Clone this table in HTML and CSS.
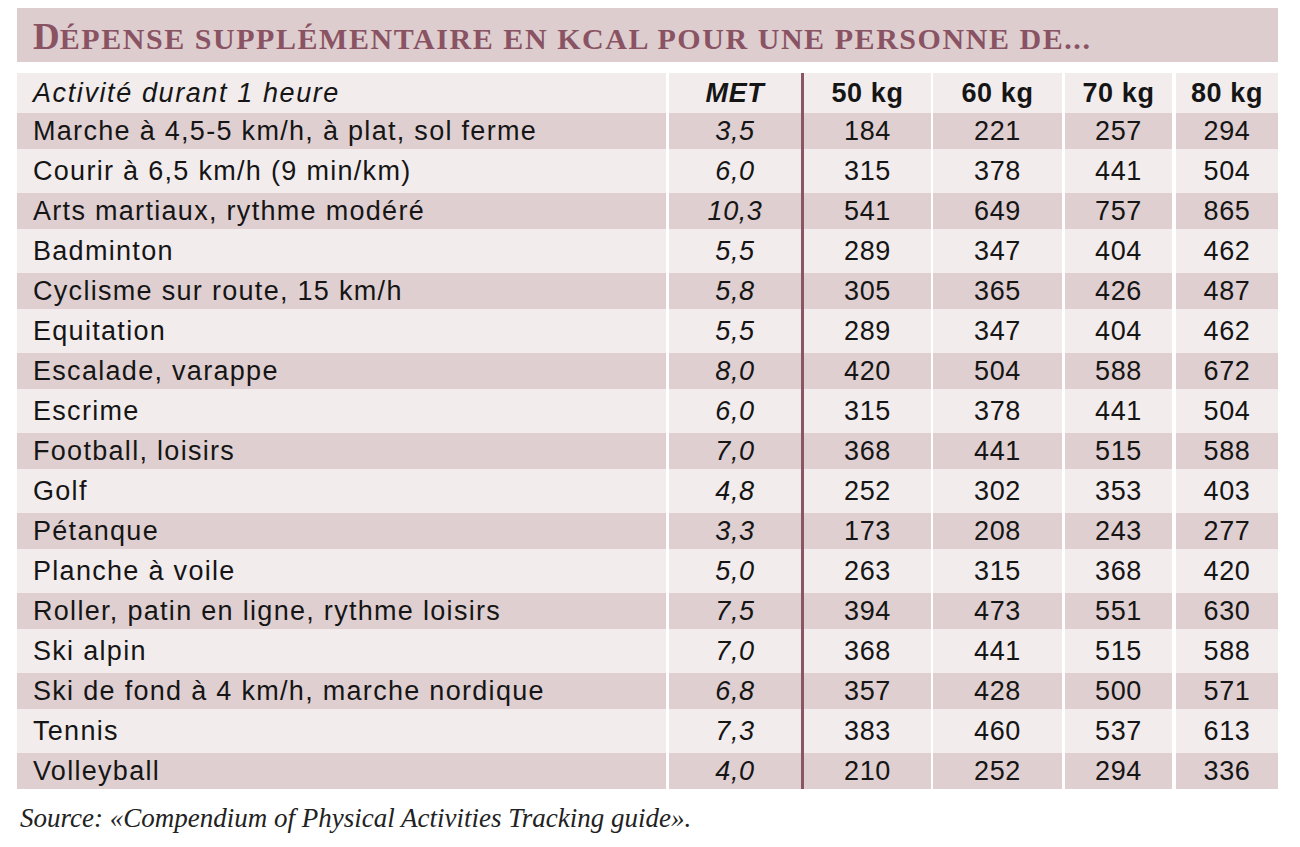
FILE: index.html
```html
<!DOCTYPE html>
<html lang="fr">
<head>
<meta charset="utf-8">
<title>Dépense supplémentaire en kcal</title>
<link rel="stylesheet" href="styles.css">
</head>
<body>
<div class="page">
  <h1 class="title"><span class="cap">D</span>ÉPENSE SUPPLÉMENTAIRE EN KCAL POUR UNE PERSONNE DE...</h1>
  <div class="table">
    <div class="row head">
      <div class="c act">Activité durant 1 heure</div>
      <div class="c met">MET</div>
      <div class="c n50">50 kg</div>
      <div class="c n60">60 kg</div>
      <div class="c n70">70 kg</div>
      <div class="c n80">80 kg</div>
    </div>
    <div class="row dark"><div class="c act">Marche à 4,5-5 km/h, à plat, sol ferme</div><div class="c met">3,5</div><div class="c n50">184</div><div class="c n60">221</div><div class="c n70">257</div><div class="c n80">294</div></div>
    <div class="row light"><div class="c act">Courir à 6,5 km/h (9 min/km)</div><div class="c met">6,0</div><div class="c n50">315</div><div class="c n60">378</div><div class="c n70">441</div><div class="c n80">504</div></div>
    <div class="row dark"><div class="c act">Arts martiaux, rythme modéré</div><div class="c met">10,3</div><div class="c n50">541</div><div class="c n60">649</div><div class="c n70">757</div><div class="c n80">865</div></div>
    <div class="row light"><div class="c act">Badminton</div><div class="c met">5,5</div><div class="c n50">289</div><div class="c n60">347</div><div class="c n70">404</div><div class="c n80">462</div></div>
    <div class="row dark"><div class="c act">Cyclisme sur route, 15 km/h</div><div class="c met">5,8</div><div class="c n50">305</div><div class="c n60">365</div><div class="c n70">426</div><div class="c n80">487</div></div>
    <div class="row light"><div class="c act">Equitation</div><div class="c met">5,5</div><div class="c n50">289</div><div class="c n60">347</div><div class="c n70">404</div><div class="c n80">462</div></div>
    <div class="row dark"><div class="c act">Escalade, varappe</div><div class="c met">8,0</div><div class="c n50">420</div><div class="c n60">504</div><div class="c n70">588</div><div class="c n80">672</div></div>
    <div class="row light"><div class="c act">Escrime</div><div class="c met">6,0</div><div class="c n50">315</div><div class="c n60">378</div><div class="c n70">441</div><div class="c n80">504</div></div>
    <div class="row dark"><div class="c act">Football, loisirs</div><div class="c met">7,0</div><div class="c n50">368</div><div class="c n60">441</div><div class="c n70">515</div><div class="c n80">588</div></div>
    <div class="row light"><div class="c act">Golf</div><div class="c met">4,8</div><div class="c n50">252</div><div class="c n60">302</div><div class="c n70">353</div><div class="c n80">403</div></div>
    <div class="row dark"><div class="c act">Pétanque</div><div class="c met">3,3</div><div class="c n50">173</div><div class="c n60">208</div><div class="c n70">243</div><div class="c n80">277</div></div>
    <div class="row light"><div class="c act">Planche à voile</div><div class="c met">5,0</div><div class="c n50">263</div><div class="c n60">315</div><div class="c n70">368</div><div class="c n80">420</div></div>
    <div class="row dark"><div class="c act">Roller, patin en ligne, rythme loisirs</div><div class="c met">7,5</div><div class="c n50">394</div><div class="c n60">473</div><div class="c n70">551</div><div class="c n80">630</div></div>
    <div class="row light"><div class="c act">Ski alpin</div><div class="c met">7,0</div><div class="c n50">368</div><div class="c n60">441</div><div class="c n70">515</div><div class="c n80">588</div></div>
    <div class="row dark"><div class="c act">Ski de fond à 4 km/h, marche nordique</div><div class="c met">6,8</div><div class="c n50">357</div><div class="c n60">428</div><div class="c n70">500</div><div class="c n80">571</div></div>
    <div class="row light"><div class="c act">Tennis</div><div class="c met">7,3</div><div class="c n50">383</div><div class="c n60">460</div><div class="c n70">537</div><div class="c n80">613</div></div>
    <div class="row dark"><div class="c act">Volleyball</div><div class="c met">4,0</div><div class="c n50">210</div><div class="c n60">252</div><div class="c n70">294</div><div class="c n80">336</div></div>
  </div>
  <p class="source">Source: «Compendium of Physical Activities Tracking guide».</p>
</div>
</body>
</html>
```

FILE: styles.css
```css
html, body {
  margin: 0;
  padding: 0;
  background: #ffffff;
}

.page {
  padding: 8px 0 0 17px;
  width: 1261px;
}

.title {
  margin: 0;
  height: 54px;
  box-sizing: border-box;
  padding: 0 0 0 16px;
  background: #ddcdcf;
  color: #8a5363;
  font-family: "Liberation Serif", "Times New Roman", serif;
  font-weight: bold;
  font-size: 30px;
  line-height: 57px;
  letter-spacing: 1.55px;
  white-space: nowrap;
}

.title .cap {
  font-size: 37px;
  letter-spacing: 0;
}

.table {
  margin-top: 11px;
  display: flex;
  flex-direction: column;
  font-family: "Liberation Sans", Arial, sans-serif;
  font-size: 27px;
  color: #151515;
}

.row {
  display: grid;
  grid-template-columns: 649px 135px 130px 131px 110px 106px;
  align-items: stretch;
}

.row.head { height: 40px; }
.row.dark { height: 36px; }
.row.light { height: 44px; }

.c {
  display: flex;
  align-items: center;
  justify-content: center;
  box-sizing: border-box;
  white-space: nowrap;
  letter-spacing: 0.6px;
}

.head .c { background: #f2eced; }
.dark .c { background: #dfcfd1; }
.light .c { background: #f2eced; }

.c.act {
  justify-content: flex-start;
  padding-left: 16px;
  letter-spacing: 1.3px;
}

.c.met {
  border-left: 3px solid #ffffff;
  font-style: italic;
}

.c.n50 { border-left: 3px solid #8a5565; }
.c.n60 { border-left: 2px solid #ffffff; }
.c.n70 { border-left: 3px solid #ffffff; }
.c.n80 { border-left: 4px solid #ffffff; }

.head .c.act {
  font-style: italic;
  letter-spacing: 1.6px;
}

.head .c.met,
.head .c.n50,
.head .c.n60,
.head .c.n70,
.head .c.n80 {
  font-weight: bold;
}

.source {
  margin: 14px 0 0 3px;
  font-family: "Liberation Serif", "Times New Roman", serif;
  font-style: italic;
  font-size: 27px;
  color: #222222;
}
```
